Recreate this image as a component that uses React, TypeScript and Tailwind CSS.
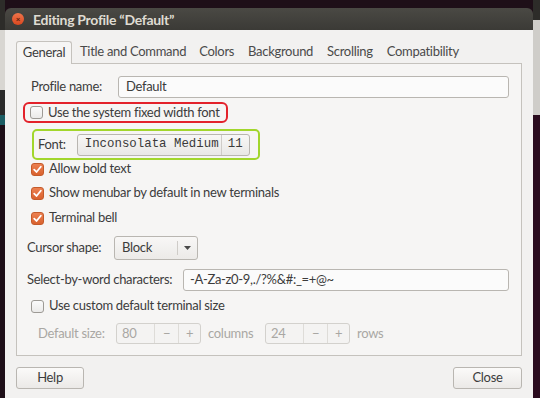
import React from "react"

const sans = { fontFamily: 'Lato, "Noto Sans", sans-serif' }

function CheckBox({ checked }: { checked?: boolean }) {
  if (checked) {
    return (
      <span className="flex h-[13px] w-[13px] shrink-0 items-center justify-center rounded-[3px] border border-[#c45a2a] bg-gradient-to-b from-[#ec8050] to-[#d9622e]">
        <svg width="9" height="9" viewBox="0 0 9 9">
          <path d="M1.2 4.6 L3.5 7 L7.8 1.8" fill="none" stroke="#fff" strokeWidth="1.8" strokeLinecap="round" strokeLinejoin="round" />
        </svg>
      </span>
    )
  }
  return <span className="block h-[13px] w-[13px] shrink-0 rounded-[3px] border border-[#9d9a95] bg-gradient-to-b from-[#fbfbfb] to-[#ebeae9]" />
}

function CheckRow({ label, checked, className }: { label: string; checked?: boolean; className?: string }) {
  return (
    <div className={"flex h-[16px] items-center gap-[5px] pl-[14px] " + (className ?? "")}>
      <CheckBox checked={checked} />
      <span>{label}</span>
    </div>
  )
}

function SpinBox({ value }: { value: string }) {
  return (
    <div className="flex h-[21px] w-[85px] items-stretch rounded-[3px] border border-[#d3d1cd] bg-[#f4f3f2] text-[#a9a7a3]">
      <span className="flex flex-1 items-center pl-[5px]">{value}</span>
      <span className="flex w-[24px] items-center justify-center border-l border-[#dedcd8]">−</span>
      <span className="flex w-[22px] items-center justify-center border-l border-[#dedcd8]">+</span>
    </div>
  )
}

export default function App() {
  return (
    <div className="flex h-[398px] w-[540px] overflow-hidden whitespace-nowrap bg-[#1e0f18] text-[13px] tracking-[-0.3px] text-[#3c3c3c]" style={sans}>
      {/* bord gauche */}
      <div className="flex w-[5px] flex-col">
        <div className="h-[30px] bg-[#2d2c29]" />
        <div className="h-[60px] bg-[#d8d6d2]" />
        <div className="h-[25px] bg-[#2a2a2a]" />
        <div className="h-[10px] bg-[#1c5d64]" />
        <div className="flex-1 bg-[#1e0f18]" />
      </div>

      {/* fenêtre */}
      <div className="mt-[8px] flex w-[528px] flex-col">
        <div className="flex h-[22px] items-center gap-[9px] rounded-t-[6px] bg-gradient-to-b from-[#4a4944] to-[#3b3a36] pl-[7px]">
          <span className="flex h-[12px] w-[12px] items-center justify-center rounded-full bg-gradient-to-b from-[#f0744a] to-[#d9471e] text-[8px] font-bold leading-none tracking-normal text-[#5a1e0c]">
            ×
          </span>
          <span className="text-[14px] font-bold tracking-[-0.3px] text-[#dfdbd2]">Editing Profile “Default”</span>
        </div>

        <div className="flex flex-1 flex-col bg-[#f2f1f0] px-[11px] pt-[10px]">
          {/* onglets */}
          <div className="flex h-[23px] items-end">
            <div className="relative z-10 -mb-px flex h-[23px] w-[56px] items-center justify-center rounded-t-[3px] border border-b-0 border-[#c5c2bd] bg-[#f6f5f4]">
              General
            </div>
            <div className="flex h-[22px] items-center pl-[8px] pr-[6px] text-[#4a4a4a]">Title and Command</div>
            <div className="flex h-[22px] items-center px-[7px] text-[#4a4a4a]">Colors</div>
            <div className="flex h-[22px] items-center px-[7px] text-[#4a4a4a]">Background</div>
            <div className="flex h-[22px] items-center px-[7px] text-[#4a4a4a]">Scrolling</div>
            <div className="flex h-[22px] items-center px-[7px] text-[#4a4a4a]">Compatibility</div>
          </div>

          {/* panneau */}
          <div className="flex h-[293px] flex-col border border-[#c5c2bd] bg-[#f6f5f4] pr-[12px] pt-[12px]">
            <div className="flex h-[22px] items-center">
              <span className="w-[101px] pl-[14px]">Profile name:</span>
              <div className="flex h-[22px] flex-1 items-center rounded-[3px] border border-[#b9b6b1] bg-[#fbfbfb] pl-[7px]">Default</div>
            </div>

            <div className="ml-[6px] mt-[4px] flex h-[21px] w-[205px] items-center gap-[5px] rounded-[6px] border-[2.5px] border-[#e3222b] pl-[5px]">
              <CheckBox />
              <span>Use the system fixed width font</span>
            </div>

            <div className="ml-[15px] mt-[6px] flex h-[31px] w-[228px] items-center gap-[11px] rounded-[5px] border-[2.5px] border-[#a2d62c] pl-[4px]">
              <span>Font:</span>
              <div
                className="flex h-[22px] w-[173px] items-center rounded-[3px] border border-[#b9b6b1] bg-gradient-to-b from-[#f8f7f6] to-[#e9e8e6] text-[12.4px] tracking-normal text-[#3a3a3a]"
                style={{ fontFamily: '"Liberation Mono", "DejaVu Sans Mono", monospace' }}
              >
                <span className="flex-1 pl-[7px]">Inconsolata Medium</span>
                <span className="flex h-full items-center border-l border-[#cfccc8] px-[6px]">11</span>
              </div>
            </div>

            <CheckRow label="Allow bold text" checked className="mt-[1px]" />
            <CheckRow label="Show menubar by default in new terminals" checked className="mt-[8px]" />
            <CheckRow label="Terminal bell" checked className="mt-[9px]" />

            <div className="mt-[10px] flex h-[24px] items-center">
              <span className="w-[97px] pl-[10px]">Cursor shape:</span>
              <div className="flex h-[24px] w-[84px] items-stretch rounded-[3px] border border-[#b9b6b1] bg-gradient-to-b from-[#f8f7f6] to-[#eceae8]">
                <span className="flex flex-1 items-center pl-[7px]">Block</span>
                <span className="my-[4px] border-l border-[#cfccc8]" />
                <span className="flex w-[19px] items-center justify-center">
                  <svg width="7" height="4" viewBox="0 0 7 4">
                    <path d="M0 0 H7 L3.5 4 Z" fill="#4a4a4a" />
                  </svg>
                </span>
              </div>
            </div>

            <div className="mt-[9px] flex h-[22px] items-center">
              <span className="w-[166px] pl-[10px]">Select-by-word characters:</span>
              <div className="flex h-[22px] flex-1 items-center rounded-[3px] border border-[#b9b6b1] bg-[#fbfbfb] pl-[6px]">
                -A-Za-z0-9,./?%&amp;#:_=+@~
              </div>
            </div>

            <CheckRow label="Use custom default terminal size" className="mt-[7px]" />

            <div className="mt-[9px] flex h-[21px] items-center text-[#a9a7a3]">
              <span className="w-[99px] pl-[21px]">Default size:</span>
              <SpinBox value="80" />
              <span className="ml-[7px] w-[57px]">columns</span>
              <SpinBox value="24" />
              <span className="ml-[7px]">rows</span>
            </div>
          </div>

          {/* boutons */}
          <div className="mt-[11px] flex justify-between">
            <button className="h-[22px] w-[68px] rounded-[3px] border border-[#b9b6b1] bg-gradient-to-b from-[#fbfaf9] to-[#ebe9e7]">Help</button>
            <button className="h-[22px] w-[69px] rounded-[3px] border border-[#b9b6b1] bg-gradient-to-b from-[#fbfaf9] to-[#ebe9e7]">Close</button>
          </div>
        </div>
      </div>

      {/* bord droit */}
      <div className="flex flex-1 flex-col">
        <div className="h-[20px] bg-[#2d2c29]" />
        <div className="h-[95px] bg-[#cfcdc9]" />
        <div className="flex-1 bg-[#2a0b1e]" />
      </div>
    </div>
  )
}
